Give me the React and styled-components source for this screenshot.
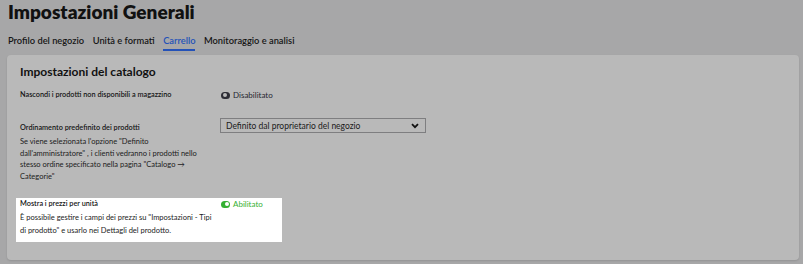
import React from 'react'
import styled, { createGlobalStyle } from 'styled-components'

const Global = createGlobalStyle`
  html, body { margin: 0; padding: 0; background: #a7a7a8; }
  body { font-family: Lato, "Liberation Sans", sans-serif; color: #141414; }
`

const Page = styled.div`
  width: 803px;
  height: 264px;
  padding: 0 4px 0 7px;
  box-sizing: border-box;
  overflow: hidden;
`

const Title = styled.h1`
  margin: 0;
  padding-left: 1px;
  font-size: 19px;
  font-weight: 800;
  line-height: 24px;
  color: #111;
`

const Tabs = styled.nav`
  display: flex;
  gap: 8.5px;
  margin-top: 10px;
  padding-left: 1px;
`

const Tab = styled.div`
  font-size: 9.3px;
  font-weight: 600;
  line-height: 13px;
  padding-bottom: 1.5px;
  color: ${p => (p.$active ? '#2452b8' : '#151515')};
  border-bottom: 2px solid ${p => (p.$active ? '#2452b8' : 'transparent')};
`

const Card = styled.section`
  margin-top: 4.5px;
  height: 205px;
  background: #b9b9b9;
  border-radius: 4px;
  box-shadow: 0 1px 2px rgba(0, 0, 0, 0.12);
  padding: 9px 9px 0 9px;
  box-sizing: border-box;
`

const CardTitle = styled.h2`
  margin: 0 0 5px 4px;
  font-size: 12px;
  font-weight: 700;
  line-height: 16px;
  color: #111;
`

const Row = styled.div`
  display: grid;
  grid-template-columns: 200px auto;
  align-items: start;
  width: ${p => (p.$wide ? '394px' : '258px')};
  padding: ${p => (p.$focus ? '0 4px 5px' : '4px')};
  margin-bottom: ${p => p.$gap || 0}px;
  background: ${p => (p.$focus ? '#ffffff' : 'transparent')};
`

const Label = styled.div`
  font-size: 7.3px;
  font-weight: 600;
  line-height: 12px;
  color: #161616;
`

const Desc = styled.p`
  grid-column: 1 / 2;
  margin: ${p => (p.$tight ? '1px' : '2px')} 0 0 0;
  width: 194px;
  font-size: 7.5px;
  line-height: ${p => (p.$tight ? '13px' : '11.5px')};
  color: #1c1c1c;
`

const Toggle = styled.div`
  display: flex;
  align-items: center;
  gap: 3px;
  padding-left: 1px;
  font-size: 8px;
  font-weight: 400;
  line-height: 12px;
  color: ${p => (p.$on ? '#35b032' : '#262630')};
`

const Switch = styled.span`
  position: relative;
  width: 9px;
  height: 7px;
  border-radius: 4px;
  background: ${p => (p.$on ? '#35b032' : '#2e2e36')};
  &::after {
    content: '';
    position: absolute;
    top: 1.5px;
    ${p => (p.$on ? 'right: 1.5px;' : 'left: 1.5px;')}
    width: 4px;
    height: 4px;
    border-radius: 50%;
    background: ${p => (p.$on ? '#fff' : '#b9b9b9')};
  }
`

const Select = styled.div`
  display: flex;
  align-items: center;
  justify-content: space-between;
  width: 206px;
  height: 15px;
  margin-top: -4px;
  padding: 0 6px 0 5px;
  box-sizing: border-box;
  border: 1px solid #7e7e80;
  background: #b9b9b9;
  font-size: 8.5px;
  color: #1a1a1a;
`

function StatusToggle({ on }) {
  return (
    <Toggle $on={on}>
      <Switch $on={on} />
      {on ? 'Abilitato' : 'Disabilitato'}
    </Toggle>
  )
}

export default function App() {
  return (
    <Page>
      <Global />
      <Title>Impostazioni Generali</Title>
      <Tabs>
        <Tab>Profilo del negozio</Tab>
        <Tab>Unità e formati</Tab>
        <Tab $active>Carrello</Tab>
        <Tab>Monitoraggio e analisi</Tab>
      </Tabs>
      <Card>
        <CardTitle>Impostazioni del catalogo</CardTitle>
        <Row $gap={13}>
          <Label>Nascondi i prodotti non disponibili a magazzino</Label>
          <StatusToggle on={false} />
        </Row>
        <Row $wide $gap={12}>
          <Label>Ordinamento predefinito dei prodotti</Label>
          <Select>
            Definito dal proprietario del negozio
            <svg width="8" height="6" viewBox="0 0 8 6">
              <path d="M1 1.2 L4 4.2 L7 1.2" fill="none" stroke="#111" strokeWidth="1.8" />
            </svg>
          </Select>
          <Desc>
            Se viene selezionata l'opzione "Definito dall'amministratore" , i clienti vedranno i prodotti nello stesso ordine specificato nella pagina "Catalogo → Categorie"
          </Desc>
        </Row>
        <Row $focus>
          <Label>Mostra i prezzi per unità</Label>
          <StatusToggle on />
          <Desc $tight>
            È possibile gestire i campi dei prezzi su "Impostazioni - Tipi di prodotto" e usarlo nei Dettagli del prodotto.
          </Desc>
        </Row>
      </Card>
    </Page>
  )
}
